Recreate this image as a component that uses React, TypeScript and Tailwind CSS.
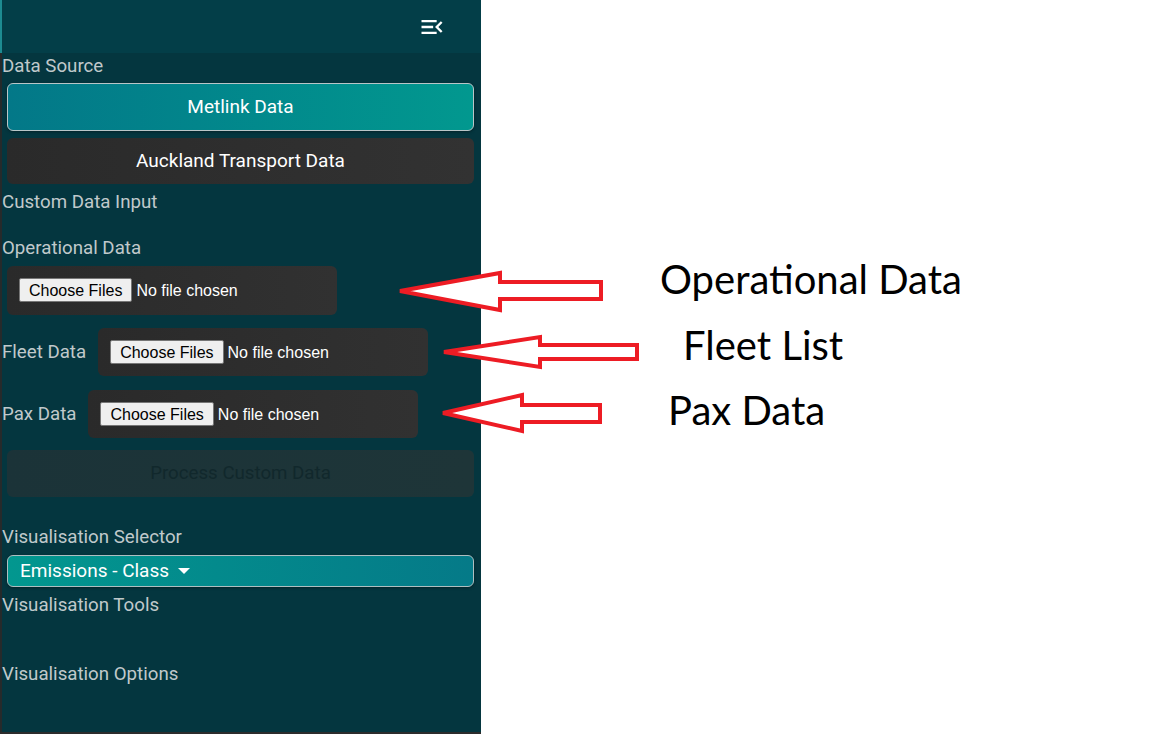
import React from 'react';

const labelCls = "h-[24px] leading-[24px] text-[18.7px] text-[#c0c9cb] whitespace-nowrap";

function MenuOpenIcon() {
  return (
    <svg width="28" height="28" viewBox="0 0 24 24" fill="#ffffff">
      <path d="M3 18h13v-2H3v2zm0-5h10v-2H3v2zm0-7v2h13V6H3zm18 9.59L17.42 12 21 8.41 19.59 7l-5 5 5 5L21 15.59z" />
    </svg>
  );
}

function FileBox({ className = '' }: { className?: string }) {
  return (
    <div className={`w-[330px] flex items-center px-3 rounded-[6px] bg-gradient-to-r from-[#2a2a2a] to-[#313131] ${className}`}>
      <input
        type="file"
        multiple
        className="w-[306px] text-white text-[16px] font-['Liberation_Sans',Arial,sans-serif] file:h-[24px] file:bg-[#efefef] file:text-black file:border file:border-[#767676] file:rounded-[2px] file:px-[9px] file:mr-[4px]"
      />
    </div>
  );
}

export default function App() {
  return (
    <div className="relative w-[1152px] h-[734px] bg-white flex font-['Roboto',sans-serif] overflow-hidden">
      {/* Sidebar */}
      <aside className="w-[481px] h-[734px] flex flex-col border-b-2 border-[#2c2c2c]">
        <div className="h-[53px] shrink-0 bg-[#033e48] border-l-2 border-[#1d8b91] flex items-center justify-end pr-[35px]">
          <MenuOpenIcon />
        </div>
        <div className="flex-1 bg-[#04363f] border-l-2 border-[#262a2b] flex flex-col">
          <div className={`mt-[1px] ${labelCls}`}>Data Source</div>
          <button className="mt-[5px] ml-[5px] mr-[7px] h-[48px] rounded-[6px] border border-[#b9c6c8] bg-gradient-to-r from-[#037888] to-[#02988f] text-white text-[19px] shadow-[0_1px_3px_rgba(0,0,0,0.35)]">
            Metlink Data
          </button>
          <button className="mt-[7px] ml-[5px] mr-[7px] h-[46px] rounded-[6px] bg-gradient-to-r from-[#2a2a2a] to-[#323232] text-white text-[19px]">
            Auckland Transport Data
          </button>
          <div className={`mt-[6px] ${labelCls}`}>Custom Data Input</div>
          <div className={`mt-[22px] ${labelCls}`}>Operational Data</div>
          <FileBox className="mt-[6px] ml-[5px] h-[49px]" />
          <div className="mt-[13px] flex items-center">
            <div className={labelCls}>Fleet Data</div>
            <FileBox className="ml-[12px] h-[48px]" />
          </div>
          <div className="mt-[14px] flex items-center">
            <div className={labelCls}>Pax Data</div>
            <FileBox className="ml-[12px] h-[48px]" />
          </div>
          <button
            disabled
            className="mt-[12px] ml-[5px] mr-[7px] h-[47px] rounded-[6px] bg-gradient-to-r from-[#1b3338] to-[#1e3538] text-[#11282c] text-[18.7px]"
          >
            Process Custom Data
          </button>
          <div className={`mt-[28px] ${labelCls}`}>Visualisation Selector</div>
          <button className="mt-[6px] ml-[5px] mr-[7px] h-[32px] rounded-[6px] border border-[#aebfc1] bg-gradient-to-r from-[#02978f] to-[#057a88] text-white text-[19px] flex items-center px-3 gap-[9px] shadow-[0_1px_3px_rgba(0,0,0,0.35)]">
            <span>Emissions - Class</span>
            <span className="w-0 h-0 border-l-[6px] border-r-[6px] border-t-[6px] border-l-transparent border-r-transparent border-t-white" />
          </button>
          <div className={`mt-[6px] ${labelCls}`}>Visualisation Tools</div>
          <div className={`mt-[45px] ${labelCls}`}>Visualisation Options</div>
        </div>
      </aside>

      {/* Annotations */}
      <svg className="absolute inset-0 pointer-events-none" width="1152" height="734">
        <g fill="#ffffff" stroke="#ed1c24" strokeWidth="4" strokeLinejoin="miter">
          <polygon points="400,291 500,273 500,282 601,282 601,299 500,299 500,310" />
          <polygon points="444,352 540,337 540,345 637,345 637,359 540,359 540,367" />
          <polygon points="443,413 522,395 522,405 600,405 600,422 522,422 522,431" />
        </g>
      </svg>
      <div className="absolute left-[660px] top-[259px] text-[40px] leading-[40px] text-black font-['Lato',sans-serif] whitespace-nowrap">
        Operational Data
      </div>
      <div className="absolute left-[683px] top-[325px] text-[40px] leading-[40px] text-black font-['Lato',sans-serif] whitespace-nowrap">
        Fleet List
      </div>
      <div className="absolute left-[668px] top-[390px] text-[40px] leading-[40px] text-black font-['Lato',sans-serif] whitespace-nowrap">
        Pax Data
      </div>
    </div>
  );
}
